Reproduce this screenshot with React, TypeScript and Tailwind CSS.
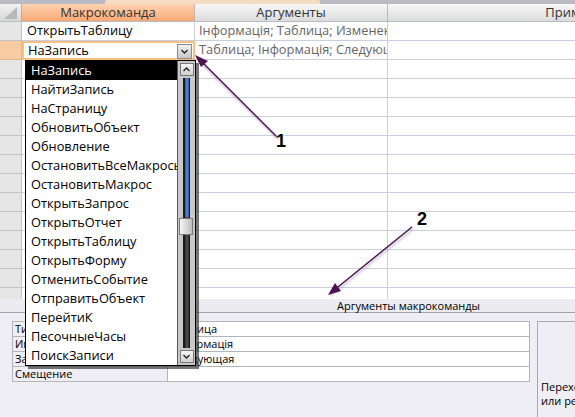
import React from 'react';

const macroItems = [
  'НаЗапись',
  'НайтиЗапись',
  'НаСтраницу',
  'ОбновитьОбъект',
  'Обновление',
  'ОстановитьВсеМакросы',
  'ОстановитьМакрос',
  'ОткрытьЗапрос',
  'ОткрытьОтчет',
  'ОткрытьТаблицу',
  'ОткрытьФорму',
  'ОтменитьСобытие',
  'ОтправитьОбъект',
  'ПерейтиК',
  'ПесочныеЧасы',
  'ПоискЗаписи',
];

const rows = [
  { macro: 'ОткрытьТаблицу', args: 'Інформація; Таблица; Изменение' },
  { macro: 'НаЗапись', args: 'Таблица; Інформація; Следующая' },
  ...Array.from({ length: 13 }, () => ({ macro: '', args: '' })),
];

const argRows = [
  { name: 'Тип объекта', value: 'Таблица' },
  { name: 'Имя объекта', value: 'Інформація' },
  { name: 'Запись', value: 'Следующая' },
  { name: 'Смещение', value: '' },
];

const Chevron: React.FC<{ up?: boolean }> = ({ up }) => (
  <svg width="7" height="5" viewBox="0 0 7 5">
    <path d={up ? 'M0.5 4 L3.5 1 L6.5 4' : 'M0.5 1 L3.5 4 L6.5 1'} fill="none" stroke="#222" strokeWidth="1.3" />
  </svg>
);

const DropdownList: React.FC = () => (
  <div className="absolute left-[25px] top-[60px] w-[171px] border border-black bg-white shadow-[3px_3px_0_rgba(60,60,60,0.7)]">
    <div className="flex">
      <ul className="flex-1 min-w-0 overflow-hidden">
        {macroItems.map((item, i) => (
          <li
            key={item}
            className={`h-[19px] pl-[5px] leading-[19px] whitespace-nowrap ${i === 0 ? 'bg-black text-white' : 'text-black'}`}
          >
            {item}
          </li>
        ))}
      </ul>
      {/* scrollbar */}
      <div className="w-[18px] shrink-0 flex flex-col items-center bg-[#c8c8c8] border-l border-[#5a5a5a] py-[2px]">
        <div className="w-[14px] h-[13px] flex items-center justify-center bg-linear-to-b from-[#f4f4f4] to-[#d0d0d0] border border-[#7a7a7a]">
          <Chevron up />
        </div>
        <div className="w-[7px] flex-1 flex flex-col items-center border-x border-[#1a1a1a] bg-[#1a1a1a] my-[2px]">
          <div className="w-[4px] h-[139px] bg-linear-to-r from-[#2c55a6] via-[#5b86d6] to-[#2c55a6]" />
          <div className="w-[4px] flex-1 bg-linear-to-r from-[#2a2a2a] via-[#575757] to-[#2a2a2a]" />
        </div>
        <div className="w-[14px] h-[13px] flex items-center justify-center bg-linear-to-b from-[#f4f4f4] to-[#d0d0d0] border border-[#7a7a7a]">
          <Chevron />
        </div>
      </div>
    </div>
    {/* thumb */}
    <div className="absolute right-[2px] top-[157px] w-[14px] h-[17px] bg-linear-to-r from-[#f6f6f6] to-[#bdbdbd] border border-[#7a7a7a]" />
  </div>
);

const Arrows: React.FC = () => (
  <svg className="absolute inset-0 pointer-events-none" width="575" height="417" viewBox="0 0 575 417">
    <defs>
      <filter id="sh" x="-20%" y="-20%" width="140%" height="140%">
        <feGaussianBlur stdDeviation="1.2" />
      </filter>
    </defs>
    <g stroke="#9a8aa0" strokeWidth="2" opacity="0.5" filter="url(#sh)">
      <line x1="278" y1="139" x2="198" y2="60" />
      <line x1="413" y1="229" x2="330" y2="296" />
    </g>
    <g stroke="#4a1352" strokeWidth="1.4" fill="#4a1352">
      <line x1="277" y1="137" x2="200" y2="60" />
      <polygon points="195,55 208,61 201,67" stroke="none" />
      <line x1="412" y1="227" x2="333" y2="291" />
      <polygon points="328,295 335,283 341,291" stroke="none" />
    </g>
  </svg>
);

export default function App() {
  return (
    <div className="relative w-[575px] h-[417px] overflow-hidden bg-white font-['Open_Sans',sans-serif] text-[12.8px] text-black">
      {/* top tab strip */}
      <div className="h-[4px] flex bg-[#b9bac4]">
        <div className="w-[105px] shrink-0" />
        <div className="w-[215px] shrink-0 bg-[#f3dcc0] rounded-t-[2px]" />
      </div>

      {/* macro grid */}
      <div className="h-[295px] overflow-hidden">
        <div className="flex h-[18px] border-b border-[#b8bcc8]">
          <div className="w-[22px] shrink-0 relative bg-linear-to-b from-[#f2f2f2] to-[#d8d8d8] border-r border-[#b0b0b0]">
            <svg className="absolute left-[4px] top-[3px]" width="14" height="13" viewBox="0 0 14 13">
              <polygon points="13,0 13,12 0,12" fill="#b9b9b9" />
            </svg>
          </div>
          <div className="w-[173px] shrink-0 flex items-center justify-center bg-linear-to-b from-[#fdd3b1] to-[#f9a873] border-r border-[#c9b4a6] text-[13px] text-[#333]">
            Макрокоманда
          </div>
          <div className="w-[193px] shrink-0 flex items-center justify-center bg-linear-to-b from-[#f7f7f7] to-[#dcdcdc] border-r border-[#b8b8b8] text-[13px] text-[#333]">
            Аргументы
          </div>
          <div className="w-[396px] shrink-0 flex items-center justify-center bg-linear-to-b from-[#f7f7f7] to-[#dcdcdc] text-[13px] text-[#333]">
            Примечание
          </div>
        </div>
        {rows.map((row, i) => (
          <div key={i} className="flex h-[19px]">
            <div
              className={`w-[22px] shrink-0 border-b border-r ${i === 1 ? 'bg-[#f9cba2] border-[#e2b48e]' : 'bg-[#e6e6e6] border-[#c4c4c4]'}`}
            />
            {i === 1 ? (
              <div className="w-[173px] shrink-0 relative flex items-center pl-[4px] border-2 border-[#f7bf82] bg-white">
                НаЗапись
                <div className="absolute right-[1px] top-[1px] w-[15px] h-[15px] flex items-center justify-center bg-linear-to-b from-[#f0f0f0] to-[#c8c8c8] border border-[#8c8c8c]">
                  <Chevron />
                </div>
              </div>
            ) : (
              <div className="w-[173px] shrink-0 flex items-center pl-[5px] border-b border-r border-[#c7cfe0]">{row.macro}</div>
            )}
            <div className="w-[193px] shrink-0 flex items-center pl-[4px] border-b border-r border-[#c7cfe0] text-[#666] whitespace-nowrap overflow-hidden">
              {row.args}
            </div>
            <div className="w-[396px] shrink-0 border-b border-[#c7cfe0]" />
          </div>
        ))}
      </div>

      {/* arguments section */}
      <div className="h-[14px] bg-[#ebebf0] border-b border-[#a2a2aa] pl-[337px] text-[11px] leading-[14px] whitespace-nowrap">
        Аргументы макрокоманды
      </div>
      <div className="h-[104px] bg-[#efeef4] flex pt-[8px] pl-[12px] gap-[7px]">
        <div className="w-[518px] shrink-0 self-start border-t border-[#b4b4bc] text-[11px]">
          {argRows.map((r) => (
            <div key={r.name} className="flex h-[15px] border-b border-[#b4b4bc]">
              <div className="w-[156px] shrink-0 pl-[2px] leading-[14px] border-x border-[#b4b4bc] bg-[#efeef4]">{r.name}</div>
              <div className="flex-1 pl-[4px] leading-[14px] border-r border-[#b4b4bc] bg-white">{r.value}</div>
            </div>
          ))}
        </div>
        <div className="flex-1 min-w-0 border-l border-t border-[#a8a8b0] pt-[58px] pl-[3px] text-[11px] leading-[14px] whitespace-nowrap overflow-hidden">
          <div>Переход к указанной записи</div>
          <div>или редактирование</div>
        </div>
      </div>

      <DropdownList />
      <Arrows />

      <span className="absolute left-[276px] top-[131px] font-['Liberation_Sans',sans-serif] font-bold text-[18px] leading-[20px] [text-shadow:0_0_2px_#fff,0_0_3px_#fff]">
        1
      </span>
      <span className="absolute left-[417px] top-[209px] font-['Liberation_Sans',sans-serif] font-bold text-[18px] leading-[20px] [text-shadow:0_0_2px_#fff,0_0_3px_#fff]">
        2
      </span>
    </div>
  );
}
